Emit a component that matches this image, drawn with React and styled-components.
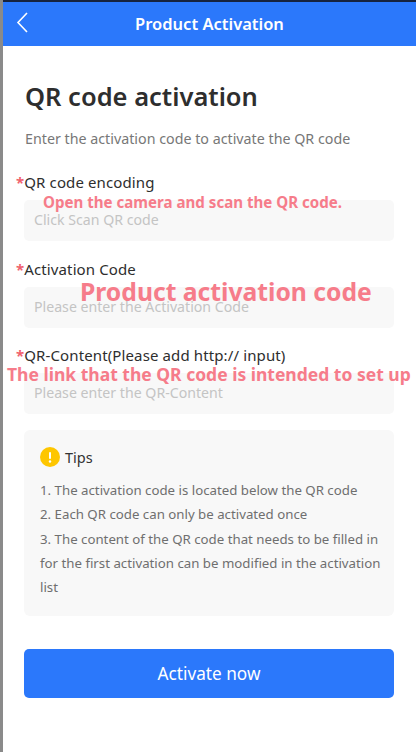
import React from "react";
import styled, { createGlobalStyle } from "styled-components";

const Global = createGlobalStyle`
  html, body { margin: 0; padding: 0; background: #fff; }
  * { box-sizing: border-box; }
  body { font-family: "Noto Sans", "Open Sans", sans-serif; }
`;

const Screen = styled.div`
  position: relative;
  width: 416px;
  height: 752px;
  overflow: hidden;
  background: #fff;
  border-left: 3px solid #8a8a8a;
  display: flex;
  flex-direction: column;
`;

const EdgeSliver = styled.div`
  position: absolute;
  left: -3px;
  top: 28px;
  width: 3px;
  height: 39px;
  background: #0f6191;
`;

const TopEdge = styled.div`
  height: 2px;
  flex: none;
  background: #16233f;
`;

const Header = styled.header`
  height: 44px;
  flex: none;
  background: #2b78fb;
  color: #fff;
  display: flex;
  align-items: center;
  justify-content: center;
  position: relative;
  font-size: 16.5px;
  font-weight: 600;
  padding: 0 0 2px 0;
`;

const Back = styled.svg`
  position: absolute;
  left: 13px;
  top: 8px;
`;

const Body = styled.main`
  padding: 32px 22px 0 21px;
  display: flex;
  flex-direction: column;
`;

const Title = styled.h1`
  margin: 0;
  font-size: 25.5px;
  line-height: 36px;
  font-weight: 600;
  color: #2e2e2e;
  padding-left: 1px;
`;

const Sub = styled.p`
  margin: 15px 0 0;
  padding-left: 1px;
  font-size: 14.27px;
  line-height: 20px;
  color: #777;
`;

const Field = styled.div`
  margin-top: ${(p) => p.$top}px;
  display: flex;
  flex-direction: column;
`;

const Label = styled.label`
  font-size: 15px;
  letter-spacing: 0.12px;
  line-height: 20px;
  color: #2e2e2e;
  margin-left: -8px;
`;

const Star = styled.span`
  color: #f0616d;
  font-weight: 700;
`;

const Input = styled.div`
  margin-top: 8px;
  height: 41px;
  border-radius: 5px;
  background: #f8f8f8;
  padding: 0 10px 2px;
  display: flex;
  align-items: center;
  font-size: 14.15px;
  color: #c4c4c4;
`;

const Note = styled.div`
  position: absolute;
  white-space: nowrap;
  font-weight: 700;
  color: #f67c8a;
  left: ${(p) => p.$left}px;
  top: ${(p) => p.$top}px;
  font-size: ${(p) => p.$size}px;
  line-height: 1.2;
`;

const Tips = styled.section`
  margin-top: 16px;
  height: 186px;
  border-radius: 6px;
  background: #f8f8f8;
  padding: 17px 8px 17px 16px;
`;

const TipsHead = styled.div`
  display: flex;
  align-items: center;
  gap: 5px;
  font-size: 14.5px;
  line-height: 20px;
  color: #333;
`;

const TipsText = styled.div`
  margin-top: 11px;
  font-size: 13.25px;
  line-height: 24.3px;
  color: #6f6f6f;
`;

const Button = styled.button`
  margin-top: 33px;
  height: 49px;
  width: 100%;
  border: 0;
  border-radius: 5px;
  background: #2b78fb;
  color: #fff;
  font-family: inherit;
  font-size: 17.2px;
`;

export default function App() {
  return (
    <Screen>
      <Global />
      <EdgeSliver />
      <TopEdge />
      <Header>
        <Back width="14" height="24" viewBox="0 0 14 24" fill="none" stroke="#fff" strokeWidth="1.6">
          <path d="M11 3 2 12.5 11 22" />
        </Back>
        Product Activation
      </Header>
      <Body>
        <Title>QR code activation</Title>
        <Sub>Enter the activation code to activate the QR code</Sub>
        <Field $top={23}>
          <Label><Star>*</Star>QR code encoding</Label>
          <Input>Click Scan QR code</Input>
        </Field>
        <Field $top={17.5}>
          <Label><Star>*</Star>Activation Code</Label>
          <Input>Please enter the Activation Code</Input>
        </Field>
        <Field $top={17.5}>
          <Label><Star>*</Star>QR-Content(Please add http:// input)</Label>
          <Input>Please enter the QR-Content</Input>
        </Field>
        <Tips>
          <TipsHead>
            <svg width="20" height="20" viewBox="0 0 20 20">
              <circle cx="10" cy="10" r="10" fill="#fec600" />
              <rect x="9" y="5" width="2" height="7" rx="1" fill="#fff" />
              <circle cx="10" cy="14.5" r="1.2" fill="#fff" />
            </svg>
            Tips
          </TipsHead>
          <TipsText>
            1. The activation code is located below the QR code<br />
            2. Each QR code can only be activated once<br />
            3. The content of the QR code that needs to be filled in for the first activation can be modified in the activation list
          </TipsText>
        </Tips>
        <Button>Activate now</Button>
      </Body>
      <Note $left={40} $top={193} $size={15.1}>Open the camera and scan the QR code.</Note>
      <Note $left={77} $top={277} $size={24.7}>Product activation code</Note>
      <Note $left={4} $top={364} $size={17.5}>The link that the QR code is intended to set up</Note>
    </Screen>
  );
}
